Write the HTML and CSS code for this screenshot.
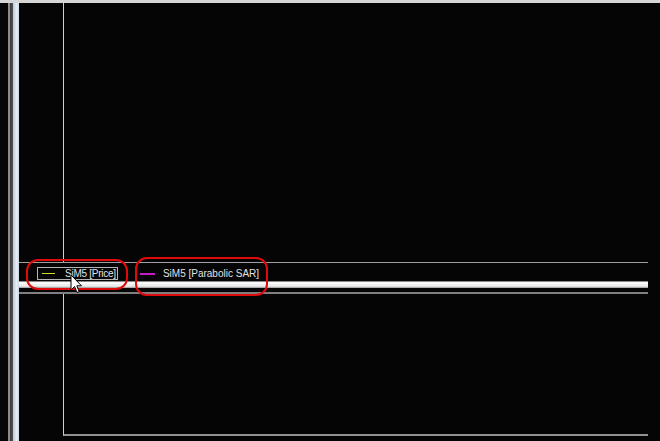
FILE: index.html
```html
<!DOCTYPE html>
<html>
<head>
<meta charset="utf-8">
<link rel="stylesheet" href="styles.css">
</head>
<body>
<div class="topbar"></div>
<div class="main">
  <div class="frame">
    <div class="f-black"></div>
    <div class="f-gray"></div>
    <div class="f-dark"></div>
    <div class="f-light"></div>
  </div>
  <div class="chart">
    <div class="pane pane-top"></div>
    <div class="hline thin"></div>
    <div class="legend-row">
      <div class="legend-item boxed">
        <span class="swatch swatch-price"></span>
        <span class="label label-tight">SiM5 [Price]</span>
      </div>
      <div class="legend-item plain">
        <span class="swatch swatch-sar"></span>
        <span class="label">SiM5 [Parabolic SAR]</span>
      </div>
    </div>
    <div class="band"></div>
    <div class="band-gap"></div>
    <div class="hline lower"></div>
    <div class="pane pane-bottom"></div>
  </div>
</div>
<div class="mark mark-1"></div>
<div class="mark mark-2"></div>
<svg class="cursor" width="13" height="20" viewBox="0 0 13 20">
  <path d="M1 1 L1 16 L4.5 12.5 L7 18.5 L9.2 17.6 L6.8 11.8 L11.5 11.8 Z" fill="#ffffff" stroke="#000000" stroke-width="1" stroke-linejoin="miter"/>
</svg>
</body>
</html>
```
FILE: styles.css
```css
html, body {
  margin: 0;
  padding: 0;
  background: #050505;
  width: 660px;
  height: 441px;
  overflow: hidden;
  font-family: "Liberation Sans", Arial, sans-serif;
}
body {
  position: relative;
}
.topbar {
  height: 3px;
  background: #d6d6d6;
}
.main {
  display: flex;
  height: 438px;
}
.frame {
  display: flex;
  width: 19px;
  flex: none;
}
.f-black { width: 8px; background: #060606; }
.f-gray { width: 2px; background: #8c8c8c; }
.f-dark { width: 3px; background: linear-gradient(to right, #3a3a3a, #555); }
.f-light { width: 6px; background: linear-gradient(to right, #b9c9da, #e6eef6 60%, #c9d6e4); }
.chart {
  width: 629px;
  display: flex;
  flex-direction: column;
}
.pane {
  margin-left: 44px;
  border-left: 1px solid #cfcfcf;
}
.pane-top {
  height: 259px;
}
.hline.thin {
  height: 1px;
  background: #a0a0a0;
}
.legend-row {
  height: 18px;
  display: flex;
  align-items: flex-start;
  padding-top: 4px;
  box-sizing: border-box;
  padding-left: 18px;
}
.legend-item {
  display: flex;
  align-items: center;
  height: 13px;
  box-sizing: border-box;
  flex: none;
}
.legend-item.boxed {
  border: 1px solid #b4b4b4;
  padding-left: 4px;
  padding-right: 1px;
}
.legend-item.plain {
  margin-left: 22px;
}
.swatch {
  display: block;
  height: 1px;
  flex: none;
}
.swatch-price {
  width: 13px;
  background: #d2da28;
  margin-right: 10px;
}
.swatch-sar {
  width: 15px;
  height: 2px;
  background: #c21cc8;
  margin-right: 8px;
}
.label {
  font-size: 10px;
  line-height: 11px;
  color: #e2e2e2;
  white-space: nowrap;
}
.label-tight {
  letter-spacing: -0.25px;
}
.band {
  height: 7px;
  background: linear-gradient(to bottom, #8a8a8a 0, #8a8a8a 1px, #f4f4f4 1px, #ffffff 3px, #dcdcdc 4px, #ffffff 5px, #bdbdbd 6px, #9a9a9a 7px);
}
.band-gap {
  height: 4px;
}
.hline.lower {
  height: 2px;
  background: #808080;
}
.pane-bottom {
  height: 142px;
  box-sizing: border-box;
  border-bottom: 2px solid #929292;
}
.mark {
  position: absolute;
  border: 2px solid #e00a0a;
  border-radius: 12px;
  box-sizing: border-box;
}
.mark-1 {
  left: 26px;
  top: 259px;
  width: 102px;
  height: 31px;
}
.mark-2 {
  left: 135px;
  top: 257px;
  width: 133px;
  height: 39px;
}
.cursor {
  position: absolute;
  left: 70px;
  top: 274px;
}
```
